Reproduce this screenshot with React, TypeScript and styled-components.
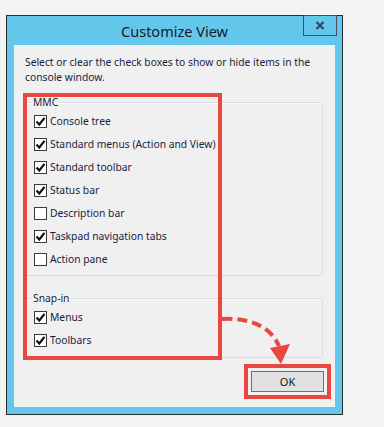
import styled, { createGlobalStyle } from "styled-components";

const GlobalStyle = createGlobalStyle`
  html, body {
    margin: 0;
    padding: 0;
    background: #f3f3f3;
  }
  body {
    font-family: "Noto Sans", "Open Sans", sans-serif;
  }
`;

const accent = "#e8483f";

const Page = styled.div`
  width: 384px;
  height: 427px;
  padding: 15px 0 0 6px;
  box-sizing: border-box;
`;

const Window = styled.div`
  position: relative;
  width: 337px;
  height: 400px;
  box-sizing: border-box;
  border: 1px solid #2b2b2b;
  background: #62c7ea;
  display: flex;
  flex-direction: column;
`;

const TitleBar = styled.div`
  height: 29px;
  display: grid;
  grid-template-columns: 1fr auto 1fr;
  align-items: start;
`;

const Title = styled.h1`
  grid-column: 2;
  margin: 7px 0 0;
  font-size: 14.5px;
  font-weight: 400;
  line-height: 16px;
  color: #1a1a2a;
`;

const CloseButton = styled.button`
  grid-column: 3;
  justify-self: end;
  margin: -1px 5px 0 0;
  width: 34px;
  height: 21px;
  padding: 0;
  border: 1px solid #4a4a58;
  background: transparent;
  display: flex;
  align-items: center;
  justify-content: center;
`;

const Client = styled.div`
  flex: 1;
  margin: 0 7px 7px;
  background: #f0f0f0;
  padding: 10px 12px 0 11px;
  display: flex;
  flex-direction: column;
  font-size: 10.3px;
  line-height: 15px;
  color: #1c1c3c;
`;

const Intro = styled.p`
  margin: 0 0 10px;
`;

const Group = styled.fieldset<{ $gap?: number; $bottom: number }>`
  margin: ${(p) => p.$gap ?? 0}px 0 0;
  padding: 0 0 ${(p) => p.$bottom}px 8px;
  border: 1px solid #d9dde2;
  box-shadow: inset 1px 1px 0 #fbfbfb;
  border-radius: 2px;
`;

const Legend = styled.legend`
  padding: 0 1px;
  margin-left: -2px;
  line-height: 15px;
  color: #1c1c3c;
`;

const Row = styled.label`
  height: 23px;
  display: flex;
  align-items: center;
  gap: 3px;
`;

const Box = styled.span`
  width: 13px;
  height: 13px;
  box-sizing: border-box;
  border: 1px solid #3a3a3a;
  background: #fff;
  display: flex;
  align-items: center;
  justify-content: center;
`;

const Footer = styled.div`
  display: flex;
  justify-content: flex-end;
  margin: 6px -8px 0 0;
`;

const OkHighlight = styled.div`
  border: 4px solid ${accent};
  padding: 3px;
`;

const OkButton = styled.button`
  width: 73px;
  height: 21px;
  border: 1px solid #3d7fb5;
  background: #e1e1e1;
  font-family: inherit;
  font-size: 11px;
  color: #111;
  padding: 0;
`;

const Callout = styled.div`
  position: absolute;
  left: 16px;
  top: 77px;
  width: 199px;
  height: 267px;
  box-sizing: border-box;
  border: 4px solid ${accent};
  pointer-events: none;
`;

const Arrow = styled.svg`
  position: absolute;
  left: 0;
  top: 0;
  pointer-events: none;
`;

function Check({ on }: { on: boolean }) {
  return (
    <Box>
      {on && (
        <svg width="11" height="11" viewBox="0 0 11 11">
          <path d="M1.5 5.5 L4.3 8.5 L9.5 1.8" fill="none" stroke="#111" strokeWidth="2.2" />
        </svg>
      )}
    </Box>
  );
}

const mmc = [
  { label: "Console tree", on: true },
  { label: "Standard menus (Action and View)", on: true },
  { label: "Standard toolbar", on: true },
  { label: "Status bar", on: true },
  { label: "Description bar", on: false },
  { label: "Taskpad navigation tabs", on: true },
  { label: "Action pane", on: false },
];

const snapIn = [
  { label: "Menus", on: true },
  { label: "Toolbars", on: true },
];

export default function App() {
  return (
    <Page>
      <GlobalStyle />
      <Window>
        <TitleBar>
          <Title>Customize View</Title>
          <CloseButton aria-label="Close">
            <svg width="10" height="9" viewBox="0 0 10 9">
              <path d="M1.5 1 L8.5 8 M8.5 1 L1.5 8" stroke="#2f4b5c" strokeWidth="2.3" />
            </svg>
          </CloseButton>
        </TitleBar>
        <Client>
          <Intro>Select or clear the check boxes to show or hide items in the console window.</Intro>
          <Group $bottom={4}>
            <Legend>MMC</Legend>
            {mmc.map((item) => (
              <Row key={item.label}>
                <Check on={item.on} />
                {item.label}
              </Row>
            ))}
          </Group>
          <Group $gap={15} $bottom={5}>
            <Legend>Snap-in</Legend>
            {snapIn.map((item) => (
              <Row key={item.label}>
                <Check on={item.on} />
                {item.label}
              </Row>
            ))}
          </Group>
          <Footer>
            <OkHighlight>
              <OkButton>OK</OkButton>
            </OkHighlight>
          </Footer>
        </Client>
        <Callout />
        <Arrow width="335" height="398" viewBox="0 0 335 398">
          <path d="M215 303 Q259 301 272 330" fill="none" stroke={accent} strokeWidth="4" strokeDasharray="10 5" />
          <polygon points="274,348 263,332 283,328" fill={accent} />
        </Arrow>
      </Window>
    </Page>
  );
}
